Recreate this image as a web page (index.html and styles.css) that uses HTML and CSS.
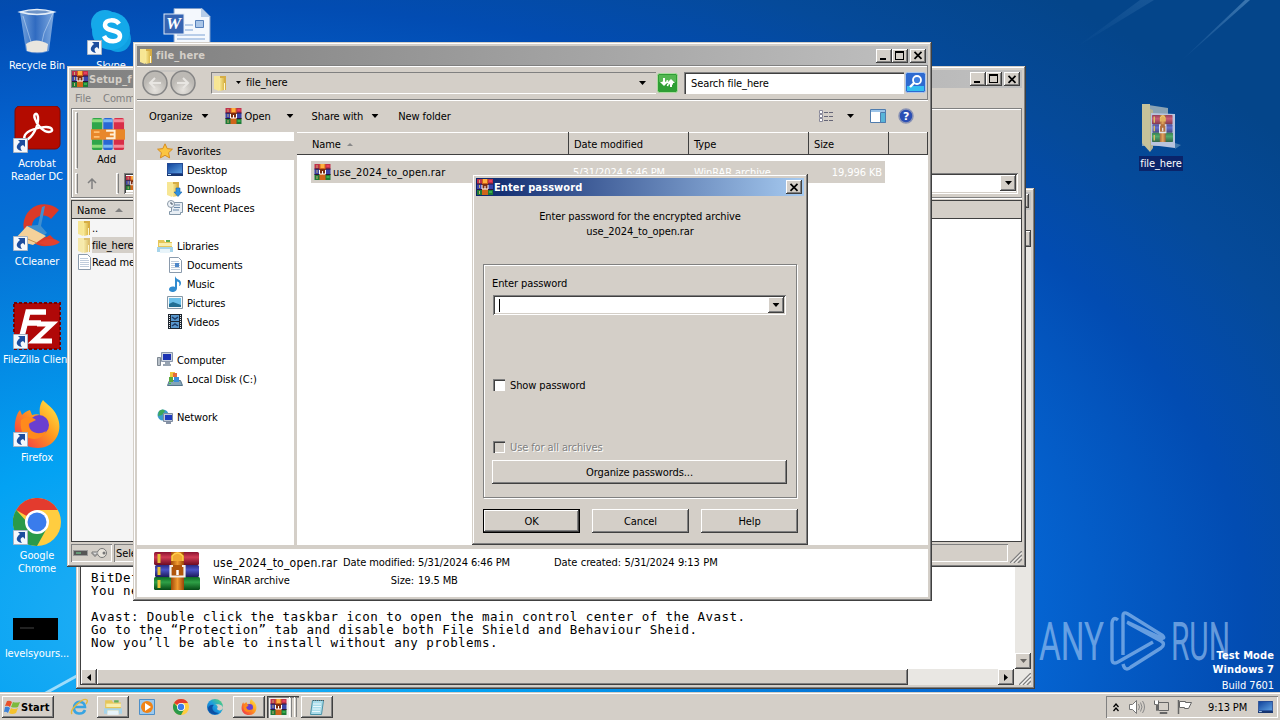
FILE: index.html
```html
<!DOCTYPE html>
<html lang="en">
<head>
  <meta charset="UTF-8">
  <meta name="viewport" content="width=device-width, initial-scale=1.0">
  <title>Desktop</title>
  <link rel="stylesheet" href="styles.css">
</head>
<body>
  <!-- ICONS -->
  <svg class="defs" width="0" height="0">
    <defs>
      <linearGradient id="gRed" x1="0" y1="0" x2="0" y2="1"><stop offset="0" stop-color="#8a1230"/><stop offset=".4" stop-color="#d03a54"/><stop offset="1" stop-color="#6d0c22"/></linearGradient>
      <linearGradient id="gBlue" x1="0" y1="0" x2="0" y2="1"><stop offset="0" stop-color="#2a2a80"/><stop offset=".4" stop-color="#4a54c8"/><stop offset="1" stop-color="#1d1a5c"/></linearGradient>
      <linearGradient id="gGreen" x1="0" y1="0" x2="0" y2="1"><stop offset="0" stop-color="#0d6a25"/><stop offset=".4" stop-color="#2fa046"/><stop offset="1" stop-color="#064a16"/></linearGradient>
      <linearGradient id="gBelt" x1="0" y1="0" x2="1" y2="0"><stop offset="0" stop-color="#a04a08"/><stop offset=".5" stop-color="#f09a30"/><stop offset="1" stop-color="#9a4408"/></linearGradient>
      <linearGradient id="gFolder" x1="0" y1="0" x2="1" y2="0"><stop offset="0" stop-color="#fbeea0"/><stop offset="1" stop-color="#dcb94c"/></linearGradient>
      <linearGradient id="gSky" x1="0" y1="0" x2="1" y2="1"><stop offset="0" stop-color="#12459c"/><stop offset="1" stop-color="#5c9ee0"/></linearGradient>
      <linearGradient id="gFire" x1="1" y1="0" x2="0" y2="1"><stop offset="0" stop-color="#fff14a"/><stop offset=".45" stop-color="#ff9a1f"/><stop offset="1" stop-color="#f0264e"/></linearGradient>
      <linearGradient id="gEdge" x1="0" y1="1" x2="1" y2="0"><stop offset="0" stop-color="#0b57b0"/><stop offset=".5" stop-color="#1b9de2"/><stop offset="1" stop-color="#5fdc62"/></linearGradient>
      <linearGradient id="gGlass" x1="0" y1="0" x2="1" y2="0"><stop offset="0" stop-color="#9cc0ea"/><stop offset=".45" stop-color="#3f74c4"/><stop offset="1" stop-color="#a8c8ee"/></linearGradient>
    </defs>
    <symbol id="rar" viewBox="0 0 46 38" preserveAspectRatio="none">
      <rect x="0" y="0" width="45" height="13" rx="1.5" fill="url(#gRed)"/>
      <rect x="1" y="13" width="44" height="12" rx="1.5" fill="url(#gBlue)"/>
      <rect x="0" y="25" width="46" height="13" rx="1.5" fill="url(#gGreen)"/>
      <path d="M5 2v9M5 15v8M5 28v8" stroke="#e8c23a" stroke-width="3"/>
      <rect x="17" y="0" width="13" height="38" fill="url(#gBelt)"/>
      <path d="M18 9V4q5.500-6 11 0v5" fill="#f0a832" stroke="#ffcf4a" stroke-width="1.500"/>
      <path fill="#b0560c" d="M18 13h11v12H18z"/>
      <path d="M19 14h-2.500v10.500h14V14H28" fill="none" stroke="#f4f0ea" stroke-width="2.200"/>
      <path d="M23.500 18v5" stroke="#fff" stroke-width="2.500"/>
    </symbol>
    <symbol id="rar16" viewBox="0 0 16 16">
      <path fill="#c0304a" d="M0 0h16v5H0z"/><path fill="#3d44a8" d="M0 5h16v5H0z"/><path fill="#1e7a36" d="M0 10h16v6H0z"/>
      <path d="M0 5h16M0 10.500h16" stroke="#2a1438"/><path d="M2.500 1v3M2.500 6v3M2.500 12v3" stroke="#c8b070"/><path fill="#e8405c" d="M12 1h3v2h-3z"/><path fill="#38b04c" d="M12 12h3v2h-3z"/>
      <path fill="#d0641a" d="M5 0h6v16H5z"/><path fill="#ffb040" d="M6 0h4v4H6z"/><path fill="#7c2c10" d="M5 5h6v5H5z"/>
      <path d="M5 6v4h6V6M8 7v3" fill="none" stroke="#fff"/>
    </symbol>
    <symbol id="folder" viewBox="0 0 16 16">
      <path fill="#d6ad45" d="M8 1h6v14H8z"/><path fill="#f7e694" d="M2 1h6v13l-1 2-5-2z"/><path fill="url(#gFolder)" d="M7 3h5v12l-4 1-1-2z"/><path d="M12.500 8v7" stroke="#fff7cc"/>
    </symbol>
    <symbol id="shortcut" viewBox="0 0 15 15">
      <path fill="#f4f8fc" stroke="#a8b4c4" d="M.5.5h14v14H.5z"/>
      <path fill="#1d4e9e" d="M5 2h7v7l-2-2c-3 1-3 3-1 6-6-1-7-5-2-9z"/>
    </symbol>
    <symbol id="chrome" viewBox="0 0 48 48">
      <circle cx="24" cy="24" r="24" fill="#ffcd40"/>
      <path fill="#e33b2e" d="M24 24 3.200 12A24 24 0 0 1 44.800 12H24z"/>
      <path fill="#2a9a4a" d="M3.200 12A24 24 0 0 0 24 48l10-18-10 5z"/>
      <circle cx="24" cy="24" r="12" fill="#fff"/><circle cx="24" cy="24" r="9.500" fill="#3a7cec"/>
    </symbol>
    <symbol id="firefox" viewBox="0 0 48 48">
      <path fill="url(#gFire)" d="M30 0c3 4 11 8 14 16 7 15-2 32-19 32C9 48 0 37 2 23c1-6 2-10 5-13l2 5c3-3 5-4 8-5l2 5c3-1 6-1 8 0-1-6 0-11 3-15z"/>
      <circle cx="26" cy="25" r="10" fill="#6a3fd0"/><path fill="#ff8a1c" d="M8 20c5-4 11-3 15 0l-8 4c1 8 10 12 18 7-4 10-17 10-23 3-2-4-3-9-2-14z"/>
    </symbol>
    <symbol id="desk" viewBox="0 0 16 13">
      <path fill="#244a94" d="M0 0h16v13H0z"/><path fill="url(#gSky)" d="M1 1h14v9H1z"/><path fill="#16346e" d="M0 11h16v2H0z"/><path fill="#b9dcf8" d="M1 11h3v1H1z"/>
    </symbol>
    <symbol id="lib" viewBox="0 0 16 14">
      <path fill="#e6c658" d="M1 1h6l1 2h7v9H1z"/><path fill="#f8eeae" d="M2 4h13v3H2z"/><path fill="#a6d4ea" d="M0 8h16v5h-3v-3H3v3H0z"/><path fill="#62ae54" d="M9 1h4v2H9z"/><path fill="#e8f4fa" d="M3 10h10v4H3z"/>
    </symbol>
    <symbol id="page" viewBox="0 0 16 16"><path fill="#fff" stroke="#8a9aac" d="M2.500.5h9l3 3v12h-12z"/><path stroke="#c0cddc" d="M4 4.500h8M4 6.500h9M4 8.500h9M4 10.500h9M4 12.500h9"/></symbol>
    <symbol id="close" viewBox="0 0 10 9"><path d="M1.500 .8 8.500 7.800M8.500 .8 1.500 7.800" stroke="#000" stroke-width="1.700"/></symbol>
    <symbol id="down" viewBox="0 0 7 4"><path d="M0 0h7L3.500 4z"/></symbol>
    <symbol id="grip" viewBox="0 0 12 12"><path d="M0 12 12 0M4 12l8-8M8 12l4-4" stroke="#808080" stroke-width="1.500"/><path d="M1.500 12 12 1.500M5.500 12 12 5.500" stroke="#fff"/></symbol>
  </svg>

  <div class="desktop">
    <!-- light streaks of the wallpaper -->
    <svg class="streaks" width="1280" height="720">
      <defs><linearGradient id="gRay" x1="0" y1="1" x2="1" y2="0"><stop offset="0" stop-color="#8fc0ea" stop-opacity="0"/><stop offset="1" stop-color="#8fc0ea" stop-opacity=".4"/></linearGradient></defs>
      <path d="M1180 62 1245 0h5z" fill="url(#gRay)"/>
      <path d="M1075 48 1140 0h14z" fill="url(#gRay)" opacity=".35"/>
      <path d="M44 694 84 672" stroke="#d9f4ff" stroke-opacity=".7" stroke-width="3"/>
    </svg>

    <div class="icons">
      <div class="icon">
        <svg width="48" height="48" viewBox="0 0 48 48"><path fill="url(#gGlass)" fill-opacity=".75" d="M7 4h34l-5 39q-12 5-23 0z"/><path d="M7 4q17-5 34 0-17 5-34 0z" fill="#6e94c8" stroke="#e4eef8" stroke-width="1.500"/><path d="m40 5-9 20-4 18M10 8l8 26" stroke="#d4e6fa" stroke-opacity=".5" fill="none"/><path fill="#e9e6df" d="M13 36q10-7 22 0l-1 7q-10 3-20 0z"/></svg>
        <span>Recycle Bin</span>
      </div>
      <div class="icon">
        <svg width="48" height="48" viewBox="0 0 48 48"><rect x="2" y="0" width="45" height="43" rx="5" fill="#b30b00" stroke="#7e0a04"/><path d="M13 34C19 32 26 20 25 11c-1-6-5-3-3 2 2 7 9 13 14 13 5 0 4-5-3-5-9 0-19 4-21 8-1 2-1 4 1 5z" fill="none" stroke="#fff" stroke-width="2.400"/><use href="#shortcut" x="0" y="32" width="15" height="15"/></svg>
        <span>Acrobat<br>Reader DC</span>
      </div>
      <div class="icon">
        <svg width="48" height="48" viewBox="0 0 48 48"><path d="M46 6A21 21 0 1 0 44 38L37 31a11 11 0 1 1 1-16z" fill="#dc3a28"/><path fill="#3f8fd0" d="m29 3 3-1-4 20 6 7-10 7-11-14 12-1z"/><path fill="#f4d19a" d="M14 22 1 36l19 5 13-9z"/><path d="m10 33 14 6" stroke="#c99048"/><path fill="#e2412e" d="M26 39q12-8 21-1-8 7-21 1z"/><use href="#shortcut" x="0" y="32" width="15" height="15"/></svg>
        <span>CCleaner</span>
      </div>
      <div class="icon">
        <svg width="48" height="48" viewBox="0 0 48 48"><rect x="1" y="1" width="46" height="46" fill="#b00808" stroke="#700" stroke-width="2" stroke-dasharray="3 2"/><path d="M9 34 15 10h18M13 21h15" fill="none" stroke="#fff" stroke-width="5.500"/><path d="M24 22h15L21 39h18" fill="none" stroke="#fff" stroke-width="5"/><use href="#shortcut" x="0" y="32" width="15" height="15"/></svg>
        <span>FileZilla Client</span>
      </div>
      <div class="icon">
        <svg width="48" height="48" viewBox="0 0 48 48"><use href="#firefox" width="48" height="48"/><use href="#shortcut" x="0" y="32" width="15" height="15"/></svg>
        <span>Firefox</span>
      </div>
      <div class="icon">
        <svg width="48" height="48" viewBox="0 0 48 48"><use href="#chrome" width="48" height="48"/><use href="#shortcut" x="0" y="32" width="15" height="15"/></svg>
        <span>Google<br>Chrome</span>
      </div>
      <div class="icon">
        <svg width="48" height="48" viewBox="0 0 48 48"><path d="M0 22h45v22H0z"/><path d="M7 32h14" stroke="#444"/></svg>
        <span>levelsyours...</span>
      </div>
      <div class="icon">
        <svg width="48" height="48" viewBox="0 0 48 48"><circle cx="18" cy="16" r="14" fill="#17a8e8"/><circle cx="31" cy="31" r="13" fill="#0f9fe2"/><circle cx="24" cy="23" r="19" fill="#14a9ea"/><path d="M32 16c-3-5-14-5-14 1 0 7 15 4 15 11 0 7-13 7-16 0" fill="none" stroke="#fff" stroke-width="4.500"/><use href="#shortcut" x="0" y="32" width="15" height="15"/></svg>
        <span>Skype</span>
      </div>
    </div>
    <svg class="word" width="50" height="44" viewBox="0 0 50 44">
      <path fill="#f4f8fd" stroke="#7d9cc8" d="M11 .5h28l8 8V44H11z"/><path fill="#b7cde8" d="m38 0 9 9h-9z"/>
      <path d="M22 17h8M22 22h8M14 27h28M14 31h28M14 35h28" stroke="#7da2d4"/><path fill="#aac6e8" stroke="#5580bb" d="M32.500 12.500h8v7h-8z"/>
      <rect x="1" y="6" width="20" height="20" fill="#3564b2" stroke="#dfe9f6"/>
      <text x="3" y="21" class="word-w">W</text>
    </svg>

    <div class="icon folder-icon">
      <svg width="44" height="50" viewBox="0 0 44 50">
        <path fill="#8ba3b4" d="m3 1 26 4v38H3z"/><path fill="#c6c29a" d="M3 1h8v48L3 40z"/><path fill="#b4b392" d="m11 6 3 1v38l-3 4z"/><path fill="#b9c4de" d="m12 10 24 1v34l-24-3z"/>
        <use href="#rar" x="13" y="12" width="21" height="27" opacity=".75"/><path fill="#7faac8" opacity=".5" d="m36 40 6 2-6 4z"/>
      </svg>
      <span>file_here</span>
    </div>

    <svg class="watermark" width="200" height="66" viewBox="0 0 200 66">
      <text x="0" y="52" textLength="65" lengthAdjust="spacingAndGlyphs">ANY</text>
      <text x="132" y="52" textLength="59" lengthAdjust="spacingAndGlyphs">RUN</text>
      <path d="M79 12q-5-4-6 3v36q0 6 6 3l35-20M84 47V8q0-5 5-2l34 21q4 4-1 3L88 14M84 56q2 8 8 3l30-19q5-4 0-7L89 15" fill="none" stroke="#a9cdf5" stroke-opacity=".6" stroke-width="3.400"/>
    </svg>
    <div class="build"><b>Test Mode</b><b>Windows 7</b><span>Build 7601</span></div>

    <!-- NOTEPAD -->
    <div class="window notepad">
      <div class="titlebar"><span class="grow"></span><span class="btn"><svg width="10" height="9"><use href="#close"/></svg></span></div>
      <div class="note-menu"></div>
      <div class="note-body">
        <pre class="note-text">BitDef
You ne

Avast: Double click the taskbar icon to open the main control center of the Avast.
Go to the “Protection” tab and disable both File Shield and Behaviour Sheid.
Now you’ll be able to install without any problems.</pre>
        <div class="vscroll"><span class="sbtn"></span><span class="sbtn"><svg width="7" height="4" opacity=".5"><use href="#down"/></svg></span></div>
      </div>
      <div class="hscroll">
        <span class="sbtn"><svg width="4" height="7"><path d="M4 0v7L0 3.500z"/></svg></span>
        <span class="thumb"></span>
        <span class="sbtn"><svg width="4" height="7"><path d="M0 0v7l4-3.500z"/></svg></span>
        <svg class="corner" width="12" height="12"><use href="#grip"/></svg>
      </div>
    </div>

    <!-- WINRAR -->
    <div class="window winrar">
      <div class="titlebar">
        <svg width="16" height="16"><use href="#rar16"/></svg><b class="grow">Setup_f</b>
        <span class="btn"><i class="min"></i></span><span class="btn"><i class="max"></i></span><span class="btn last"><svg width="10" height="9"><use href="#close"/></svg></span>
      </div>
      <div class="rar-menu"><span>File</span><span>Comm</span></div>
      <div class="rar-bars">
        <div class="rar-tools">
          <i class="handle"></i>
          <div class="tool">
            <svg width="34" height="34" viewBox="0 0 36 34"><rect x="1" width="11" height="34" rx="2" fill="#2fa64a"/><rect x="13" width="10" height="34" rx="2" fill="#2968d4"/><rect x="24" width="11" height="34" rx="2" fill="#d82e48"/><path d="M1 3h11M1 30h11" stroke="#8edc7a" stroke-width="3"/><path d="M13 3h10M13 30h10" stroke="#7ab8f4" stroke-width="3"/><path d="M24 3h11M24 30h11" stroke="#f48a98" stroke-width="3"/><path fill="#e8872a" d="M0 12h36v11H0z"/><path d="M16 13.500h9v8h-9M20 17.500h6" fill="none" stroke="#fff0d8" stroke-width="2"/><path d="M3 15h6M3 20h6" stroke="#ffc070" stroke-width="2"/></svg>
            <span>Add</span>
          </div>
        </div>
        <div class="rar-path">
          <i class="handle"></i>
          <svg class="up-arrow" width="10" height="11" viewBox="0 0 10 11"><path d="M5 11V1M1 5l4-4 4 4" fill="none" stroke="#808080" stroke-width="1.500"/></svg>
          <i class="handle two"></i>
          <div class="combo"><svg width="14" height="16"><use href="#rar16"/></svg><span class="grow"></span><span class="sbtn"><svg width="7" height="4"><use href="#down"/></svg></span></div>
        </div>
      </div>
      <div class="rar-list">
        <div class="rar-head">Name <svg width="8" height="4"><path fill="#808080" d="M0 4h8L4 0z"/></svg></div>
        <div class="rar-row"><svg width="16" height="16"><use href="#folder"/></svg><span>..</span></div>
        <div class="rar-row sel"><svg width="16" height="16" opacity=".75"><use href="#folder"/></svg><span>file_here</span></div>
        <div class="rar-row"><svg width="16" height="16"><use href="#page"/></svg><span>Read me</span></div>
      </div>
      <div class="rar-status">
        <div class="pane first"><svg width="36" height="12" viewBox="0 0 36 12"><rect x=".5" y="3.500" width="14" height="5" fill="#555" stroke="#999"/><path d="M3 6h5" stroke="#7d9"/><circle cx="29" cy="6" r="4.500" fill="#e8e4dc" stroke="#777"/><circle cx="31" cy="6" r="1.500" fill="#777"/><path d="M25 5h-6v2h2v2h2V7h2" fill="#ddd" stroke="#777"/></svg></div>
        <div class="pane grow">Sele</div>
        <svg class="corner" width="12" height="12"><use href="#grip"/></svg>
      </div>
    </div>

    <!-- EXPLORER -->
    <div class="window explorer">
      <div class="titlebar">
        <svg width="16" height="16"><use href="#folder"/></svg><b class="grow">file_here</b>
        <span class="btn"><i class="min"></i></span><span class="btn"><i class="max"></i></span><span class="btn last"><svg width="10" height="9"><use href="#close"/></svg></span>
      </div>
      <div class="addressbar">
        <svg class="travel" width="56" height="28" viewBox="0 0 56 28"><defs><radialGradient id="gNav" cx=".5" cy=".8"><stop offset="0" stop-color="#e6e3de"/><stop offset="1" stop-color="#bcb9b4"/></radialGradient></defs><path d="M8 2h40" stroke="#bbb"/><circle cx="14" cy="14" r="12" fill="url(#gNav)" stroke="#858585" stroke-width="1.500"/><circle cx="42" cy="14" r="12" fill="url(#gNav)" stroke="#858585" stroke-width="1.500"/><path d="M20 14H9m5-5-5 5 5 5M36 14h11m-5-5 5 5-5 5" fill="none" stroke="#e8e6e2" stroke-width="2"/></svg>
        <div class="address">
          <svg width="16" height="16"><use href="#folder"/></svg>
          <svg class="crumb" width="5" height="3" viewBox="0 0 7 4"><use href="#down"/></svg>
          <span class="grow">file_here</span>
          <svg width="7" height="4"><use href="#down"/></svg>
        </div>
        <svg class="go" width="21" height="20" viewBox="0 0 21 20"><rect x=".5" y=".5" width="20" height="19" rx="2" fill="#2e9e34" stroke="#a8dc9c"/><path fill="#7cd070" opacity=".5" d="M2 2h17v7H2z"/><path d="M10 7v1q0 2-3 2H5M11 13v-1q0-2 3-2h2" fill="none" stroke="#fff" stroke-width="1.600" transform="rotate(8 10 10)"/><path fill="#fff" d="M3 9h8l-4 4zM10 10h8l-4-4z"/><path d="M7 9V5M14 10v4" stroke="#fff" stroke-width="2"/></svg>
        <div class="search">Search file_here</div>
        <svg width="21" height="21" viewBox="0 0 21 21"><rect x=".5" y=".5" width="20" height="20" rx="2" fill="#2e6ad0" stroke="#a9c6ee"/><path fill="#35bdf0" d="M2 14h17v5H2z"/><circle cx="12" cy="8" r="4" fill="#3f7fe0" stroke="#fff" stroke-width="1.800"/><path d="m9 11-4 4" stroke="#fff" stroke-width="2.400"/></svg>
      </div>
      <div class="toolbar">
        <span class="t1">Organize</span><svg width="8" height="4" viewBox="0 0 7 4"><use href="#down"/></svg>
        <svg class="t2" width="17" height="16"><use href="#rar16"/></svg><span class="t3">Open</span><svg width="8" height="4" viewBox="0 0 7 4"><use href="#down"/></svg>
        <span class="t4">Share with</span><svg width="8" height="4" viewBox="0 0 7 4"><use href="#down"/></svg>
        <span class="t5 grow">New folder</span>
        <svg width="15" height="13" viewBox="0 0 15 13"><path d="M.5.5h3v3h-3zM.5 4.500h3v3h-3zM.5 8.500h3v3h-3z" fill="#fff" stroke="#889"/><path d="M5 2.500h10M5 6.500h10M5 10.500h10" stroke="#667" stroke-dasharray="4 1"/></svg>
        <svg class="t6" width="7" height="4"><use href="#down"/></svg>
        <svg class="t7" width="16" height="14" viewBox="0 0 16 14"><path fill="#fff" stroke="#4f7cae" d="M.5.5h15v13H.5z"/><path fill="#9cc4e8" d="M1 1h14v2H1z"/><path fill="#58b4d8" stroke="#4f7cae" d="M10.500 3.500h5v10h-5z"/></svg>
        <svg width="16" height="16" viewBox="0 0 16 16"><circle cx="8" cy="8" r="7" fill="#2b4fb4" stroke="#8a93b4" stroke-width="1.500"/><text x="5" y="12" class="help">?</text></svg>
      </div>
      <div class="panes">
        <div class="nav">
          <div class="nav-row head first"><svg width="16" height="16" viewBox="0 0 16 16"><path fill="#fbc540" stroke="#d88c1e" d="m8 .8 2.200 4.800 5.200.6-3.800 3.500 1 5.200L8 12.300l-4.600 2.600 1-5.200L.6 6.200l5.200-.6z"/></svg><span>Favorites</span></div>
          <div class="nav-row"><svg width="16" height="13"><use href="#desk"/></svg><span>Desktop</span></div>
          <div class="nav-row"><svg width="16" height="16" viewBox="0 0 16 16"><use href="#folder" x="-2" width="16" height="16"/><path fill="#2f90e0" stroke="#1a66ac" stroke-width=".6" d="M9 7h4v4h2l-4 4.500L7 11h2z"/></svg><span>Downloads</span></div>
          <div class="nav-row"><svg width="16" height="16" viewBox="0 0 16 16"><path fill="#e8eef4" stroke="#8296a8" d="M4.500 2.500h11v10h-2v2h-11v-3h2z"/><path d="M7 5h6M7 7.500h6M6 10h6" stroke="#6d8bab"/><circle cx="4" cy="4" r="3.500" fill="#eef3f8" stroke="#8a98a6"/><path d="M4 2v2h2" fill="none" stroke="#456"/></svg><span>Recent Places</span></div>
          <div class="nav-row gap"></div>
          <div class="nav-row head"><svg width="16" height="14"><use href="#lib"/></svg><span>Libraries</span></div>
          <div class="nav-row"><svg width="16" height="16" viewBox="0 0 16 16"><use href="#page" width="16" height="16"/><path fill="#4d86c8" d="M8 6h4v4H8z"/></svg><span>Documents</span></div>
          <div class="nav-row"><svg width="16" height="16" viewBox="0 0 16 16"><path fill="#2f8bd0" d="M8 0c1 4 6 3 6 7 0 2-1 3-2 3 1-3 0-4-2-4.500V12c0 5-8 5-8 1.500C2 11 5 10 8 11z"/></svg><span>Music</span></div>
          <div class="nav-row"><svg width="16" height="13" viewBox="0 0 16 13"><path fill="#f4f8fa" stroke="#8798a6" d="M.5.5h15v12H.5z"/><path fill="#6cc0ea" d="M2 2h12v9H2z"/><path fill="#236f94" d="m2 8 4-2 8 3v2H2z"/></svg><span>Pictures</span></div>
          <div class="nav-row"><svg width="16" height="15" viewBox="0 0 16 15"><path fill="#1d2630" d="M1 0h14v15H1z"/><path fill="#5897cc" d="M4 1h8v6H4zM4 8h8v6H4z"/><path d="M2.500 1v14M13.500 1v14" stroke="#eee" stroke-dasharray="1 1"/><path d="m5 3 3 2 3-2M5 12l3-2 3 2" fill="none" stroke="#1e3c66" stroke-width="1.500"/></svg><span>Videos</span></div>
          <div class="nav-row gap"></div>
          <div class="nav-row head"><svg width="16" height="15" viewBox="0 0 16 15"><path fill="#b8c0c8" stroke="#7e8893" d="M.5 5.500h3v8h-3z"/><path fill="#cdd5e0" stroke="#8a97aa" d="M4.500.5h11v9h-11z"/><path fill="#1c34b4" d="M6 2h8v6H6z"/><path fill="#98a4b2" d="M8 10h5v2H8zM6 12h8v2H6z"/></svg><span>Computer</span></div>
          <div class="nav-row"><svg width="16" height="16" viewBox="0 0 16 16"><path fill="#84a4b8" stroke="#54748a" d="m2.500 9.500 11 0 2 5h-15z"/><path fill="#f0c63a" d="M3 1h5v5H3z"/><path fill="#58a83c" d="M2 6h4v5H2z"/><path fill="#e2693a" d="M6 2h4v4H6z"/><path fill="#3a8ed8" d="M7 6h5v5H7z"/><path fill="#39d04a" d="M2 12h2v1H2z"/></svg><span>Local Disk (C:)</span></div>
          <div class="nav-row gap"></div>
          <div class="nav-row head"><svg width="16" height="16" viewBox="0 0 16 16"><circle cx="6" cy="6" r="5.500" fill="#3c9ccc"/><path fill="#3ea85a" d="M2 2q4-3 6 0L5 6 1 7z"/><path fill="#bfc9d8" stroke="#7f8ca0" d="M6.500 4.500h9v8h-9z"/><path fill="#1f3cc0" d="M8 6h7v5H8z"/><path fill="#8793a6" d="M9 13h5v2H9z"/></svg><span>Network</span></div>
        </div>
        <div class="files">
          <div class="cols"><div>Name <svg width="6" height="3" viewBox="0 0 8 4"><path fill="#888" d="M0 4h8L4 0z"/></svg></div><div>Date modified</div><div>Type</div><div>Size</div><div></div></div>
          <div class="file"><svg width="17" height="16"><use href="#rar16"/></svg><span class="fname">use_2024_to_open.rar</span><span class="fdate">5/31/2024 6:46 PM</span><span class="ftype">WinRAR archive</span><span class="fsize">19,996 KB</span></div>
        </div>
      </div>
      <div class="details">
        <svg width="46" height="38"><use href="#rar"/></svg>
        <div class="d1"><div class="big">use_2024_to_open.rar</div><div>WinRAR archive</div></div>
        <div class="d2"><div>Date modified:</div><div>Size:</div></div>
        <div class="d3"><div>5/31/2024 6:46 PM</div><div>19.5 MB</div></div>
        <div class="d4">Date created: 5/31/2024 9:13 PM</div>
      </div>
    </div>

    <!-- PASSWORD DIALOG -->
    <div class="window dialog">
      <div class="titlebar active"><svg width="16" height="16"><use href="#rar16"/></svg><b class="grow">Enter password</b><span class="btn last"><svg width="10" height="9"><use href="#close"/></svg></span></div>
      <div class="prompt">Enter password for the encrypted archive<br>use_2024_to_open.rar</div>
      <div class="group">
        <div class="glabel">Enter password</div>
        <div class="combo pass"><i class="caret"></i><span class="grow"></span><span class="sbtn"><svg width="8" height="4" viewBox="0 0 7 4"><use href="#down"/></svg></span></div>
        <div class="check"><i></i>Show password</div>
        <div class="check disabled"><i></i>Use for all archives</div>
        <div class="button">Organize passwords...</div>
      </div>
      <div class="actions"><div class="button default">OK</div><div class="button">Cancel</div><div class="button">Help</div></div>
    </div>

    <!-- TASKBAR -->
    <div class="taskbar">
      <div class="start"><svg width="16" height="15" viewBox="0 0 16 15"><path fill="#e8502a" d="M3 1q3-1 5 1L6 7Q4 5 1 6z"/><path fill="#7cba3c" d="M9 2q3 1 7 0l-2 5q-3 1-7 0z"/><path fill="#3b82d8" d="M1 7q3-1 5 1l-2 5q-2-2-4-1z"/><path fill="#f4c22c" d="M7 8q3 2 7 0l-2 5q-4 2-7 0z"/></svg><b>Start</b></div>
      <div class="task"><svg width="18" height="18" viewBox="0 0 18 18"><path d="M15 12c-2 5-11 5-11-2 0-8 11-8 11-1H5" fill="none" stroke="#38a4e2" stroke-width="2.600"/><path d="M2 16C-1 12 13-1 17 2q1 1-1 4" fill="none" stroke="#e4b83c" stroke-width="1.400"/></svg></div>
      <div class="task up"><svg width="18" height="16"><use href="#lib"/></svg></div>
      <div class="task"><svg width="16" height="16" viewBox="0 0 16 16"><path fill="#9cc9ee" stroke="#4d8fc8" d="M.5.5h15v15H.5z"/><circle cx="8" cy="8" r="6" fill="#f08316"/><path fill="#fff" d="m6 4 6 4-6 4z"/></svg></div>
      <div class="task"><svg width="16" height="16"><use href="#chrome"/></svg></div>
      <div class="task"><svg width="16" height="16" viewBox="0 0 16 16"><circle cx="8" cy="8" r="8" fill="url(#gEdge)"/><path fill="#d4cfc8" d="M16 9c-1 3-5 3-6 1 2-3-1-5-3-4 4-2 9 0 9 3z"/><path fill="#0c50a4" d="M7 6c-3 2-2 8 5 8-5 3-11 0-11-5 1-3 4-4 6-3z"/></svg></div>
      <div class="task up"><svg width="16" height="16"><use href="#firefox"/></svg></div>
      <div class="task down"><svg width="17" height="16"><use href="#rar16"/></svg><i></i><i></i></div>
      <div class="task up"><svg width="16" height="16" viewBox="0 0 16 16"><path fill="#a9dcea" stroke="#4a93a8" d="M3.500 1.500h11l-2 14h-11z"/><path d="M4 5h8M4 7.500h8M3.500 10h8M3 12.500h8" stroke="#e8f8fc"/><path d="M4 1.500h11" stroke="#555" stroke-dasharray="1 1"/></svg></div>
      <div class="tray">
        <svg class="chev" width="6" height="9" viewBox="0 0 6 9"><path d="m.5 4 2.500-3 2.500 3M.5 8 3 5l2.500 3" fill="none" stroke="#000" stroke-width="1.300"/></svg>
        <svg class="s1" width="17" height="16" viewBox="0 0 17 16"><path fill="#fff" stroke="#777" d="M1.500 5.500h3l4-4v13l-4-4h-3z"/><path d="M10.500 5q2 3 0 6M12.500 3.500q3 4.500 0 9M14.500 2q4 6 0 12" fill="none" stroke="#888"/></svg>
        <svg class="s2" width="16" height="16" viewBox="0 0 16 16"><path fill="#d4cfc8" stroke="#666" d="M5.500 3.500h10v8h-10z"/><path fill="#fff" stroke="#666" d="M1.500 1.500v4h2v6h1v-6h1v-4M7 13.500h7v1H7z"/></svg>
        <svg class="s3" width="16" height="16" viewBox="0 0 16 16"><path d="M1.500 1v14" stroke="#666" stroke-width="1.500"/><path fill="#fff" stroke="#666" d="M2.500 2.500h6v1h6l-3 6h-4v-1h-5z"/></svg>
        <span>9:13 PM</span>
        <svg class="s4" width="15" height="12"><use href="#desk"/></svg>
      </div>
    </div>
  </div>
</body>
</html>
```
FILE: styles.css
```css
/* GENERAL STYLING */
body {
  margin: 0;
  overflow: hidden;
  font-family: "DejaVu Sans Condensed", "DejaVu Sans", sans-serif;
  font-stretch: condensed;
  font-size: 11px;
  line-height: 15px;
  letter-spacing: -0.1px;
  color: #000;
}

svg {
  display: block;
  flex: none;
}

.defs {
  position: absolute;
}

.grow {
  flex: 1;
}

.desktop {
  position: relative;
  width: 1280px;
  height: 720px;
  overflow: hidden;
  white-space: nowrap;
  background: radial-gradient(ellipse 1360px 800px at 200px 620px, #2ab2f5 0, #03a2f3 22%, #0572d5 49%, #0566d4 60%, #024cb2 77%, #054a9a 88%, #04458a 100%);
}

.streaks {
  position: absolute;
  left: 0;
  top: 0;
}

/* DESKTOP ICONS */
.icons {
  display: grid;
  grid-template-rows: repeat(7, 98px);
  grid-auto-flow: column;
  grid-auto-columns: 74px;
  height: 686px;
  padding-top: 8px;
}

.icon {
  display: flex;
  flex-direction: column;
  align-items: center;
  gap: 3px;
  color: #fff;
  text-align: center;
  line-height: 13px;
}

.folder-icon {
  position: absolute;
  left: 1139px;
  top: 103px;
}

.folder-icon span {
  background: #0a246a;
  padding: 1px;
}

.word {
  position: absolute;
  left: 163px;
  top: 8px;
}

.word-w {
  font: italic bold 17px "Liberation Serif", serif;
  fill: #fff;
}

.watermark {
  position: absolute;
  left: 1039px;
  top: 608px;
}

.watermark text {
  font: 53px Roboto, sans-serif;
  fill: #a9cdf5;
  fill-opacity: .6;
}

.build {
  position: absolute;
  right: 6px;
  top: 649px;
  display: flex;
  flex-direction: column;
  align-items: flex-end;
  line-height: 14px;
  color: #fff;
}

.build span {
  margin-top: 2px;
}

/* WINDOWS */
.window {
  position: absolute;
  box-sizing: border-box;
  display: flex;
  flex-direction: column;
  padding: 4px;
  background: #d4cfc8;
  box-shadow: inset -1px -1px #404040, inset 1px 1px #d4cfc8, inset -2px -2px #808080, inset 2px 2px #fff;
}

.titlebar {
  display: flex;
  align-items: center;
  height: 18px;
  flex: none;
  padding: 0 2px 0 1px;
  color: #d4cfc8;
  background: linear-gradient(90deg, #808080, #c0c0c0);
}

.titlebar.active {
  color: #fff;
  background: linear-gradient(90deg, #0a246a, #a6caf0);
}

.titlebar b {
  margin-left: 1px;
}

b {
  font-family: "DejaVu Sans Condensed", "DejaVu Sans", sans-serif;
  letter-spacing: 0.1px;
}

.btn,
.sbtn,
.button {
  display: flex;
  align-items: center;
  justify-content: center;
  box-sizing: border-box;
  background: #d4cfc8;
  box-shadow: inset -1px -1px #404040, inset 1px 1px #fff, inset -2px -2px #808080;
}

.btn {
  width: 16px;
  height: 14px;
}

.btn.last {
  margin-left: 2px;
}

.btn svg {
  margin: 0 1px 0 0;
}

.min {
  width: 6px;
  height: 2px;
  margin: 6px 3px 0 0;
  background: #000;
}

.max {
  width: 7px;
  height: 6px;
  margin: 0 1px 1px 0;
  border: 1px solid #000;
  border-top-width: 2px;
}

.sbtn {
  width: 16px;
  height: 16px;
  flex: none;
}

.combo {
  display: flex;
  align-items: center;
  box-sizing: border-box;
  padding: 2px;
  background: #fff;
  box-shadow: inset 1px 1px #808080, inset -1px -1px #fff, inset 2px 2px #404040, inset -2px -2px #d4cfc8;
}

/* NOTEPAD */
.notepad {
  left: 76px;
  top: 188px;
  width: 959px;
  height: 501px;
}

.note-menu {
  height: 20px;
}

.note-body {
  display: flex;
  justify-content: space-between;
  flex: 1;
  background: #fff;
  border: solid #404040;
  border-width: 1px 0 0 1px;
  overflow: hidden;
}

.note-text {
  align-self: flex-end;
  margin: 0 0 20px 10px;
  font: 12.5px/13px "DejaVu Sans Mono", monospace;
  letter-spacing: 0.455px;
}

.vscroll {
  display: flex;
  flex-direction: column;
  justify-content: space-between;
  background: #e9e7e3;
}

.hscroll {
  display: flex;
  align-items: center;
  height: 16px;
  background: #e9e7e3;
  border-left: 1px solid #404040;
}

.thumb {
  width: 811px;
  height: 16px;
  margin-right: 90px;
  background: #d4cfc8;
  box-shadow: inset -1px -1px #404040, inset 1px 1px #fff, inset -2px -2px #808080;
}

.corner {
  margin-left: auto;
  align-self: flex-end;
}

/* WINRAR */
.winrar {
  left: 67px;
  top: 66px;
  width: 959px;
  height: 501px;
}

.rar-menu {
  display: flex;
  gap: 12px;
  padding: 3px 4px 2px;
  color: #808080;
}

.rar-bars {
  box-sizing: border-box;
  height: 90px;
  padding: 3px;
  border: 1px solid #808080;
  box-shadow: inset 1px 1px #fff, 0 1px #fff;
}

.rar-tools {
  display: flex;
  gap: 13px;
  height: 60px;
}

.handle {
  box-sizing: border-box;
  width: 3px;
  height: 57px;
  border: 1px solid #fff;
  border-right-color: #808080;
}

.tool {
  display: flex;
  flex-direction: column;
  align-items: center;
  padding-top: 5px;
  line-height: 17px;
}

.tool span {
  margin-right: 3px;
}

.rar-path {
  display: flex;
  align-items: center;
  gap: 12px;
  height: 22px;
}

.up-arrow {
  margin-left: -3px;
}

.rar-path .handle {
  height: 21px;
}

.rar-path .two {
  margin-left: 7px;
}

.rar-path .combo {
  flex: 1;
  height: 21px;
  margin-left: -7px;
}

.rar-list {
  flex: 1;
  margin-top: 2px;
  background: linear-gradient(90deg, #f5f5f5 100px, #fff 100px);
  border: 1px solid #404040;
}

.rar-head {
  display: flex;
  align-items: center;
  gap: 9px;
  height: 16px;
  padding: 1px 0 0 5px;
  background: #d4cfc8;
  border-bottom: 1px solid #404040;
}

.rar-row {
  display: flex;
  align-items: center;
  width: 80px;
  height: 17px;
  padding-left: 4px;
}

.rar-row span {
  padding-top: 1px;
}

.rar-row.sel span {
  background: #d4cfc8;
}

.rar-status {
  display: flex;
  gap: 2px;
  height: 21px;
  align-items: center;
}

.pane {
  box-sizing: border-box;
  height: 18px;
  padding: 2px 0 0 2px;
  box-shadow: inset 1px 1px #808080, inset -1px -1px #fff;
}

.pane.first {
  width: 41px;
  padding-top: 3px;
}

/* EXPLORER */
.explorer {
  left: 133px;
  top: 42px;
  width: 799px;
  height: 559px;
}

.explorer > .titlebar {
  height: 19px;
}

.explorer > .titlebar b {
  margin-left: 2px;
}

.addressbar {
  box-sizing: border-box;
  display: flex;
  align-items: center;
  height: 35px;
  flex: none;
  padding-right: 1px;
  border: 1px solid #808080;
  border-left: 0;
  box-shadow: inset 0 1px #fff, 0 1px #fff;
}

.travel {
  margin: 0 -4px 0 4px;
}

.address {
  display: flex;
  align-items: center;
  box-sizing: border-box;
  width: 445px;
  height: 22px;
  margin-left: 18px;
  padding: 0 10px 0 0;
  border-top: 1px solid #808080;
  border-left: 1px solid #808080;
  border-bottom: 1px solid #fff;
}

.crumb {
  margin: 0 5px 0 8px;
}

.go {
  margin: 0 6px 0 1px;
}

.search {
  flex: 1;
  box-sizing: border-box;
  height: 22px;
  margin-right: 1px;
  padding: 4px 7px;
  background: #fff;
  box-shadow: inset 1px 1px #808080, inset 2px 2px #404040, inset -1px -1px #fff;
}

.toolbar {
  display: flex;
  align-items: center;
  height: 32px;
  flex: none;
  padding: 0 14px 0 12px;
}

.t1,
.t4 {
  margin-right: 8px;
}

.t2 {
  margin-left: 16px;
}

.t3 {
  margin: 0 15px 0 3px;
}

.t4 {
  margin-left: 18px;
}

.t5 {
  margin-left: 19px;
}

.t6 {
  margin: 0 16px 0 13px;
}

.t7 {
  margin-right: 12px;
}

.panes {
  display: flex;
  flex: 1;
  background: #fff;
}

.nav {
  box-sizing: border-box;
  width: 160px;
  padding-top: 9px;
  border-right: 3px solid #d4cfc8;
}

.nav-row {
  display: flex;
  align-items: center;
  gap: 4px;
  height: 19px;
  padding-left: 30px;
}

.nav-row span {
  padding-top: 1px;
}

.nav-row.head {
  padding-left: 20px;
}

.nav-row.first {
  background: #d4cfc8;
}

.files {
  flex: 1;
}

.cols {
  display: grid;
  grid-template-columns: 272px 120px 120px 80px 1fr;
  height: 23px;
}

.cols div {
  display: flex;
  align-items: center;
  gap: 6px;
  padding: 1px 0 0 5px;
  background: #d4cfc8;
  box-shadow: inset -1px -1px #404040, inset 0 1px #fff;
}

.cols div:first-child {
  padding-left: 15px;
}

.file {
  display: grid;
  grid-template-columns: 19px 240px 121px 119px 69px;
  align-items: center;
  box-sizing: border-box;
  width: 574px;
  height: 22px;
  margin: 6px 0 0 14px;
  padding-left: 3px;
  color: #fff;
  background: #d4cfc8;
}

.fname {
  color: #000;
  letter-spacing: 0.15px;
}

.fsize {
  text-align: right;
}

.details {
  display: flex;
  box-sizing: border-box;
  height: 52px;
  flex: none;
  padding-left: 17px;
  line-height: 18px;
  background: #fff;
  border-top: 4px solid #d4cfc8;
}

.details > svg {
  margin: 3px 13px 0 0;
}

.details > div {
  padding-top: 5px;
}

.big {
  font-size: 12px;
  letter-spacing: 0.25px;
}

.d1 {
  width: 130px;
}

.d2 {
  width: 71px;
  text-align: right;
}

.d3 {
  width: 136px;
  padding-left: 4px;
}

.d4 {
  word-spacing: 0.5px;
}

/* PASSWORD DIALOG */
.dialog {
  left: 472px;
  top: 174px;
  width: 336px;
  height: 371px;
}

.prompt {
  margin-top: 13px;
  text-align: center;
}

.group {
  display: flex;
  flex-direction: column;
  box-sizing: border-box;
  height: 234px;
  margin: 25px 7px 0;
  padding: 11px 9px 13px 8px;
  border: 1px solid #808080;
  box-shadow: inset 1px 1px #fff, 1px 1px #fff;
}

.pass {
  height: 20px;
  margin: 4px 1px 0;
}

.caret {
  width: 1px;
  height: 13px;
  margin-left: 4px;
  background: #000;
}

.check {
  display: flex;
  align-items: center;
  gap: 5px;
  margin: 63px 0 0 1px;
}

.check i {
  width: 12px;
  height: 12px;
  margin-bottom: 2px;
  background: #fff;
  box-shadow: inset 1px 1px #808080, inset 2px 2px #404040, inset -1px -1px #fff;
}

.check.disabled {
  margin-top: 47px;
  color: #808080;
  text-shadow: 1px 1px #fff;
}

.check.disabled i {
  background: #d4cfc8;
}

.group .button {
  margin-top: auto;
}

.button {
  height: 24px;
}

.actions {
  display: flex;
  justify-content: space-between;
  margin: 11px 6px 0 7px;
}

.actions .button {
  width: 97px;
}

.default {
  border: 1px solid #000;
}

/* TASKBAR */
.taskbar {
  position: absolute;
  left: 0;
  bottom: 0;
  display: flex;
  align-items: center;
  box-sizing: border-box;
  width: 1280px;
  height: 28px;
  padding: 2px 2px 0;
  background: #d4cfc8;
  box-shadow: inset 0 1px #d4cfc8, inset 0 2px #fff;
}

.start {
  display: flex;
  align-items: center;
  gap: 1px;
  box-sizing: border-box;
  width: 52px;
  height: 22px;
  margin-right: 9px;
  padding-left: 2px;
  box-shadow: inset -1px -1px #404040, inset 1px 1px #fff, inset -2px -2px #808080;
}

.task {
  display: flex;
  align-items: center;
  justify-content: center;
  width: 32px;
  height: 22px;
  margin-right: 2px;
}

.task.up {
  box-shadow: inset -1px -1px #404040, inset 1px 1px #fff, inset -2px -2px #808080;
}

.task.down {
  gap: 2px;
  background: linear-gradient(90deg, #f0eeeb 24px, #d4cfc8 24px);
  box-shadow: inset 1px 1px #404040, inset 2px 2px #808080;
}

.task.down i {
  width: 1px;
  height: 20px;
  border-left: 1px solid #fff;
  border-right: 1px solid #808080;
}

.tray {
  display: flex;
  align-items: center;
  box-sizing: border-box;
  width: 172px;
  height: 22px;
  margin-left: auto;
  padding-left: 7px;
  box-shadow: inset 1px 1px #808080, inset -1px -1px #fff;
}

.s1 {
  margin-left: 9px;
}

.s2,
.s3 {
  margin-left: 8px;
}

.tray span {
  width: 40px;
  margin: 0 10px 0 15px;
}

/* small mark inside the help circle */
.help {
  font: bold 11px "DejaVu Sans", sans-serif;
  fill: #fff;
}
```
